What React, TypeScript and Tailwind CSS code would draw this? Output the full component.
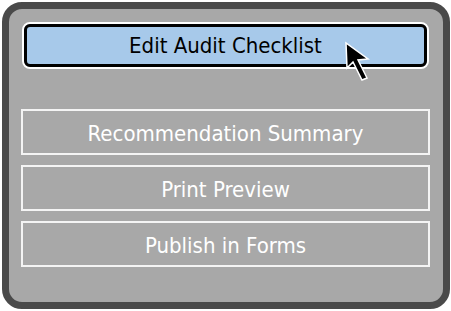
import React from "react";

export default function App() {
  const items = ["Recommendation Summary", "Print Preview", "Publish in Forms"];
  return (
    <div className="w-[451px] h-[311px] bg-white pt-[2px] pl-[2px]" style={{ fontFamily: '"DejaVu Sans Condensed", "DejaVu Sans", Verdana, sans-serif' }}>
      <div className="relative w-[448px] h-[307px] rounded-[20px] border-[7px] border-[#4a4a4a] bg-[#a8a8a8] pl-[12px] pt-[13px] flex flex-col">
        <div className="ml-[1px] w-[407px] h-[47px] rounded-[8px] border-[2px] border-white">
          <div className="w-full h-full rounded-[6px] border-[3px] border-black bg-[#a7c9ea] flex items-center justify-center pt-[1px] text-[22px] leading-none text-black">
            Edit Audit Checklist
          </div>
        </div>
        <div className="mt-[40px] flex flex-col gap-[10px]">
          {items.map((t) => (
            <div
              key={t}
              className="w-[409px] h-[46px] border-[2px] border-[#f4f4f4] flex items-center justify-center pt-[3px] text-[22px] leading-none text-white"
            >
              {t}
            </div>
          ))}
        </div>
        <svg
          className="absolute left-[335px] top-[32px]"
          width="30"
          height="44"
          viewBox="0 0 30 44"
        >
          <polygon
            points="2,2 3,27 9,21 18,39 23,37 14,19 24,18"
            fill="black"
            stroke="white"
            strokeWidth="1.5"
            strokeLinejoin="miter"
          />
        </svg>
      </div>
    </div>
  );
}
